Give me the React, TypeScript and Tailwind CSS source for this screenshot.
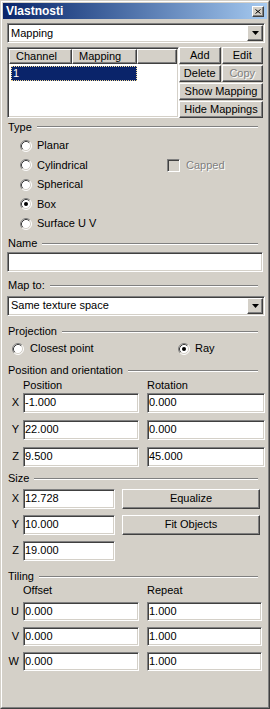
import React from "react";

const sunken =
    "bg-white border border-t-[#808080] border-l-[#808080] border-b-white border-r-white shadow-[inset_1px_1px_0_#404040,inset_-1px_-1px_0_#d4d0c8]";
const raised =
    "bg-[#d4d0c8] border border-t-white border-l-white border-b-[#404040] border-r-[#404040] shadow-[inset_-1px_-1px_0_#808080]";
const disabledText = "text-[#808080] [text-shadow:1px_1px_0_#ffffff]";

const GroupLabel = ({ text, className = "" }: { text: string; className?: string }) => (
    <div className={`flex items-center h-[14px] ${className}`}>
        <span className="pl-[1px] leading-none">{text}</span>
        <div className="flex-1 ml-[5px] mr-[7px] h-[2px] border-t border-t-[#808080] border-b border-b-white" />
    </div>
);

const Radio = ({ checked = false }: { checked?: boolean }) => (
    <svg width="12" height="12" viewBox="0 0 12 12" className="shrink-0">
        <circle cx="6" cy="6" r="5" fill="#ffffff" />
        <path d="M2.11 9.89 A5.5 5.5 0 0 1 9.89 2.11" stroke="#808080" fill="none" />
        <path d="M9.89 2.11 A5.5 5.5 0 0 1 2.11 9.89" stroke="#ffffff" fill="none" />
        <path d="M2.82 9.18 A4.5 4.5 0 0 1 9.18 2.82" stroke="#404040" fill="none" />
        <path d="M9.18 2.82 A4.5 4.5 0 0 1 2.82 9.18" stroke="#d4d0c8" fill="none" />
        {checked && <circle cx="6" cy="6" r="2" fill="#000000" />}
    </svg>
);

const Field = ({ value, className }: { value: string; className: string }) => (
    <div className={`${sunken} ${className} flex items-center pl-[1px] leading-none`}>{value}</div>
);

const Combo = ({ value, className }: { value: string; className: string }) => (
    <div className={`${sunken} ${className} flex items-center`}>
        <span className="flex-1 pl-[3px] leading-none">{value}</span>
        <div className={`${raised} w-[16px] h-[16px] mr-[1px] flex items-center justify-center`}>
            <svg width="7" height="4" viewBox="0 0 7 4">
                <path d="M0 0H7L3.5 4Z" fill="#000000" />
            </svg>
        </div>
    </div>
);

const Btn = ({ text, className = "", disabled = false }: { text: string; className?: string; disabled?: boolean }) => (
    <div className={`${raised} ${className} flex items-center justify-center leading-none ${disabled ? disabledText : ""}`}>
        {text}
    </div>
);

const Row = ({ label, children, className = "" }: { label: string; children: React.ReactNode; className?: string }) => (
    <div className={`flex items-center ${className}`}>
        <span className="w-[16px] text-right pr-[4px] leading-none">{label}</span>
        {children}
    </div>
);

export default function App() {
    return (
        <div className="w-[270px] h-[709px] bg-[#d4d0c8] font-['Liberation_Sans',Arial,sans-serif] text-[11px] text-black border border-t-[#d4d0c8] border-l-[#d4d0c8] border-b-[#404040] border-r-[#404040]">
            <div className="h-full border border-t-white border-l-white border-b-[#808080] border-r-[#808080] p-[1px] flex flex-col">
                {/* title bar */}
                <div className="h-[16px] flex items-center bg-gradient-to-r from-[#0a246a] to-[#a6caf0]">
                    <span className="pl-[3px] flex-1 text-white font-bold text-[12px] leading-none">Vlastnosti</span>
                    <div className={`${raised} w-[12px] h-[11px] mr-[3px] flex items-center justify-center`}>
                        <svg width="6" height="5" viewBox="0 0 6 5">
                            <path d="M0.5 0.5L5.5 4.5M5.5 0.5L0.5 4.5" stroke="#000000" strokeWidth="1" />
                        </svg>
                    </div>
                </div>

                <div className="flex flex-col pl-[4px] pr-[2px]">
                    <Combo value="Mapping" className="mt-[4px] h-[20px] w-[258px]" />

                    {/* channel list */}
                    <div className="flex mt-[4px] h-[71px]">
                        <div className={`${sunken} w-[172px] h-[71px] flex flex-col`}>
                            <div className="flex h-[15px] ml-[1px] mt-[1px]">
                                <div className={`${raised} w-[63px] flex items-center pl-[6px] leading-none`}>Channel</div>
                                <div className={`${raised} w-[65px] flex items-center pl-[6px] leading-none`}>Mapping</div>
                                <div className={`${raised} flex-1 mr-[1px]`} />
                            </div>
                            <div className="mt-[2px] ml-[3px] w-[126px] h-[15px] bg-[#0a246a] border border-dotted border-[#f5db95] text-white flex items-center pl-[1px] leading-none">
                                1
                            </div>
                        </div>
                        <div className="flex flex-col gap-[1px] w-[84px]">
                            <div className="flex gap-[1px] h-[17px]">
                                <Btn text="Add" className="flex-1" />
                                <Btn text="Edit" className="flex-1" />
                            </div>
                            <div className="flex gap-[1px] h-[17px]">
                                <Btn text="Delete" className="flex-1" />
                                <Btn text="Copy" className="flex-1" disabled />
                            </div>
                            <Btn text="Show Mapping" className="h-[17px]" />
                            <Btn text="Hide Mappings" className="h-[17px]" />
                        </div>
                    </div>

                    {/* type */}
                    <GroupLabel text="Type" className="mt-[2px]" />
                    <div className="flex flex-col mt-[2px]">
                        {["Planar", "Cylindrical", "Spherical", "Box", "Surface U V"].map((t) => (
                            <div key={t} className="flex items-center h-[19.5px]">
                                <div className="w-[160px] flex items-center pl-[13px]">
                                    <Radio checked={t === "Box"} />
                                    <span className="ml-[5px] leading-none">{t}</span>
                                </div>
                                {t === "Cylindrical" && (
                                    <div className="flex items-center">
                                        <div className="w-[13px] h-[13px] border border-t-[#808080] border-l-[#808080] border-b-white border-r-white shadow-[inset_1px_1px_0_#404040,inset_-1px_-1px_0_#d4d0c8]" />
                                        <span className={`ml-[6px] leading-none ${disabledText}`}>Capped</span>
                                    </div>
                                )}
                            </div>
                        ))}
                    </div>

                    {/* name */}
                    <GroupLabel text="Name" className="mt-[3px]" />
                    <div className={`${sunken} mt-[1px] h-[20px] w-[256px]`} />

                    {/* map to */}
                    <GroupLabel text="Map to:" className="mt-[7px]" />
                    <Combo value="Same texture space" className="mt-[3px] h-[20px] w-[258px]" />

                    {/* projection */}
                    <GroupLabel text="Projection" className="mt-[9px]" />
                    <div className="flex items-center h-[20px]">
                        <div className="w-[171px] flex items-center pl-[5px]">
                            <Radio />
                            <span className="ml-[6px] leading-none">Closest point</span>
                        </div>
                        <Radio checked />
                        <span className="ml-[5px] leading-none">Ray</span>
                    </div>

                    {/* position and orientation */}
                    <GroupLabel text="Position and orientation" className="mt-[5px]" />
                    <div className="flex h-[14px] items-center mt-[1px] leading-none">
                        <span className="ml-[16px] w-[124px]">Position</span>
                        <span>Rotation</span>
                    </div>
                    {[
                        ["X", "-1.000", "0.000"],
                        ["Y", "22.000", "0.000"],
                        ["Z", "9.500", "45.000"],
                    ].map(([l, p, r], i) => (
                        <Row key={l} label={l} className={i === 0 ? "" : "mt-[7px]"}>
                            <Field value={p} className="w-[116px] h-[20px]" />
                            <Field value={r} className="ml-[8px] w-[118px] h-[20px]" />
                        </Row>
                    ))}

                    {/* size */}
                    <GroupLabel text="Size" className="mt-[5px]" />
                    <Row label="X" className="mt-[3px]">
                        <Field value="12.728" className="w-[92px] h-[20px]" />
                        <Btn text="Equalize" className="ml-[7px] w-[138px] h-[20px]" />
                    </Row>
                    <Row label="Y" className="mt-[6px]">
                        <Field value="10.000" className="w-[92px] h-[20px]" />
                        <Btn text="Fit Objects" className="ml-[7px] w-[138px] h-[20px]" />
                    </Row>
                    <Row label="Z" className="mt-[6px]">
                        <Field value="19.000" className="w-[92px] h-[20px]" />
                    </Row>

                    {/* tiling */}
                    <GroupLabel text="Tiling" className="mt-[9px]" />
                    <div className="flex h-[14px] items-center leading-none">
                        <span className="ml-[16px] w-[124px]">Offset</span>
                        <span>Repeat</span>
                    </div>
                    {[
                        ["U", "0.000", "1.000"],
                        ["V", "0.000", "1.000"],
                        ["W", "0.000", "1.000"],
                    ].map(([l, o, r], i) => (
                        <Row key={l} label={l} className={i === 0 ? "mt-[4px]" : "mt-[6px]"}>
                            <Field value={o} className="w-[116px] h-[19px]" />
                            <Field value={r} className="ml-[8px] w-[115px] h-[19px]" />
                        </Row>
                    ))}
                </div>
            </div>
        </div>
    );
}
